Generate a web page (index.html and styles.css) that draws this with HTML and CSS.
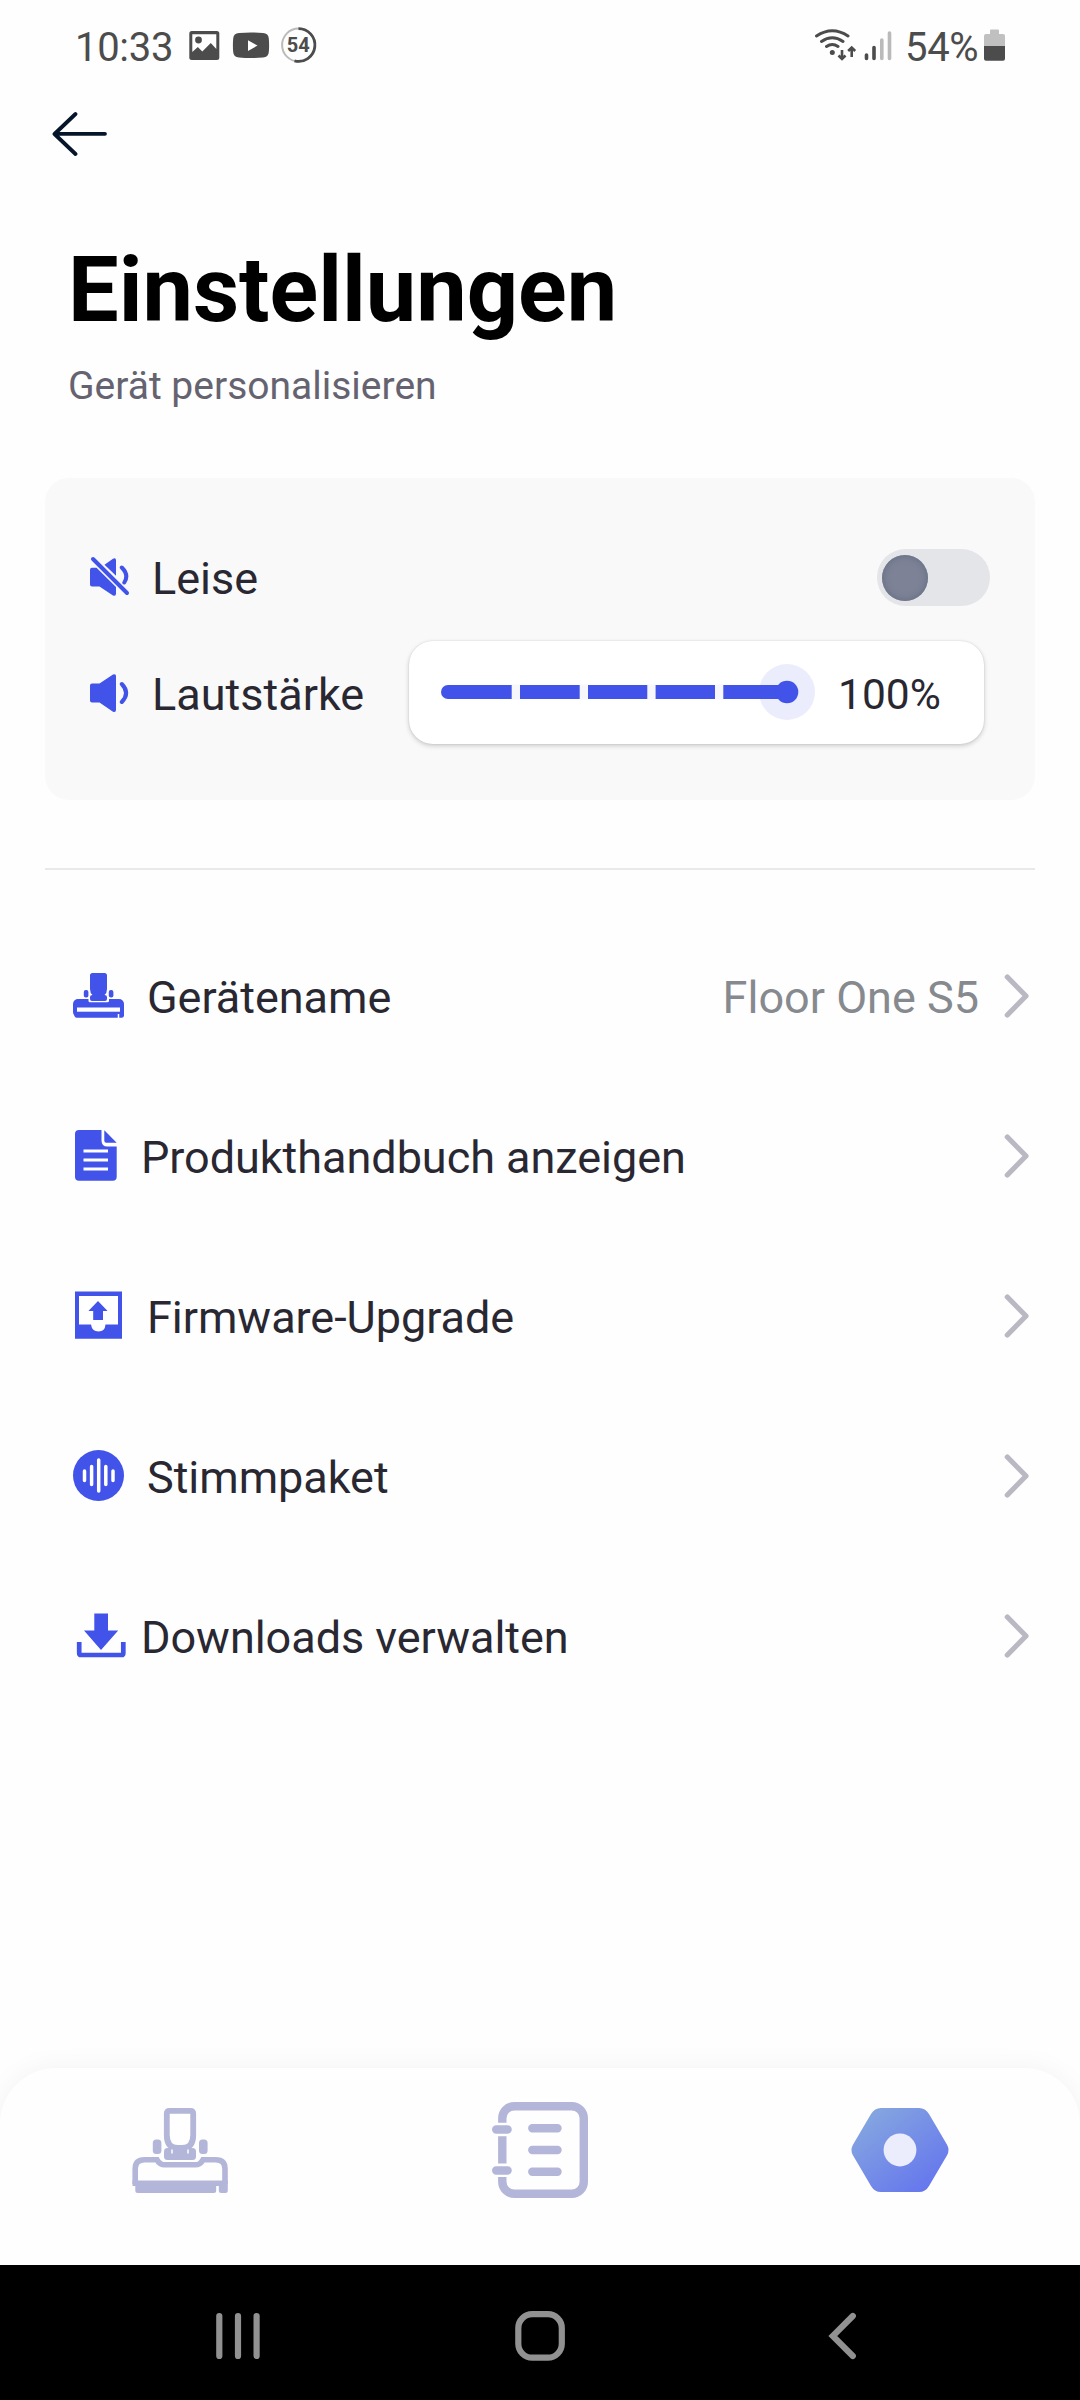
FILE: index.html
```html
<!DOCTYPE html>
<html lang="de">
<head>
<meta charset="utf-8">
<title>Einstellungen</title>
<link rel="stylesheet" href="styles.css">
</head>
<body>
<div class="screen">
  <header class="status">
    <span class="clock">10:33</span>
    <svg class="status-icons" width="160" height="44" viewBox="180 25 160 44">
      <rect x="189.300" y="31" width="30" height="29" rx="2.500" fill="#4c4c4c"/>
      <path d="M192.300 34.200h24v14.800l-5.500-6-8.500 8.500-4.500-4.500-5.500 5z" fill="#fff"/>
      <circle cx="198.500" cy="40" r="3.400" fill="#4c4c4c"/>
      <path d="M239 33q12-1 24 0 5.500.3 5.800 5.500.6 7 0 13.500-.3 5.200-5.800 5.500-12 1-24 0-5.500-.3-5.800-5.500-.6-6.500 0-13.500.3-5.200 5.800-5.500z" fill="#4c4c4c"/>
      <path d="M248 40.300v10.600l9.500-5.300z" fill="#fff"/>
      <circle cx="298.500" cy="45" r="16.400" fill="none" stroke="#bbb" stroke-width="2"/>
      <path d="M298.500 28.600a16.400 16.400 0 1 1-4 32.300" fill="none" stroke="#4c4c4c" stroke-width="2.800"/>
      <text class="badge-num" x="298.300" y="52.300" text-anchor="middle">54</text>
    </svg>
    <svg class="signal" width="84" height="44" viewBox="808 25 84 44">
      <g fill="none" stroke="#4c4c4c" stroke-width="3" stroke-linecap="round">
        <path d="M816.500 36q15.800-10.500 31.500 0M821.500 41.500q10.800-7.500 21.500 0M826.500 46.500q5.800-4 11.500 0"/>
        <path d="M842 50v8.500M838.500 55.500l3.500 3.500 3.500-3.500M851.700 57v-8.500M848.200 51l3.500-3.500 3.500 3.500" stroke-width="2.600" stroke-linecap="butt"/>
      </g>
      <circle cx="832.300" cy="52.500" r="2.500" fill="#4c4c4c"/>
      <g fill="none" stroke-width="3.600" stroke-linecap="round">
        <path d="M866.500 55v3.500M874 47.500v11" stroke="#4c4c4c"/>
        <path d="M881.800 40v18.500M889.500 33v25.500" stroke="#bababa"/>
      </g>
    </svg>
    <span class="percent">54%</span>
    <svg width="21" height="44" viewBox="984 25 21 44">
      <path d="M990 34v-3.500q0-1 1-1h7q1 0 1 1V34h4q2 0 2 2v11h-21V36q0-2 2-2z" fill="#c0c0c0"/>
      <path d="M984 46h21v12.700q0 2-2 2h-17q-2 0-2-2z" fill="#4c4c4c"/>
    </svg>
  </header>

  <nav class="back">
    <svg width="56" height="46" viewBox="52 111 56 46"><path d="M75.500 114l-21 20 21 20M55 133.800h50" fill="none" stroke="#06152a" stroke-width="3.800" stroke-linecap="round" stroke-linejoin="round"/></svg>
  </nav>

  <h1 class="title">Einstellungen</h1>
  <p class="subtitle">Gerät personalisieren</p>

  <section class="card">
    <div class="card-row">
      <svg width="42" height="48" viewBox="88 555 42 48">
        <path d="M92 567.700h4.500L116 587v6.500q0 3-3 2l-13.500-9H92q-2 0-2-2v-14.800q0-2 2-2zM104.500 564.700l8.500-6q3-1.300 3 1.600v15.500z" fill="#4153e8"/>
        <path d="M121.800 567.500q7.500 7.500 2.500 15" fill="none" stroke="#4153e8" stroke-width="4" stroke-linecap="round"/>
        <path d="M93 559l34 34" fill="none" stroke="#4153e8" stroke-width="4" stroke-linecap="round"/>
      </svg>
      <span class="card-label">Leise</span>
      <span class="toggle"><span class="toggle-knob"></span></span>
    </div>
    <div class="card-row">
      <svg width="42" height="48" viewBox="88 671 42 48">
        <path d="M90 685.500q0-2 2-2h7.500l13.500-9q3-1.200 3 1.600v33.700q0 3-3 2l-13.500-9.300H92q-2 0-2-2z" fill="#4153e8"/>
        <path d="M121.800 684q8.600 9 0 18" fill="none" stroke="#4153e8" stroke-width="4" stroke-linecap="round"/>
      </svg>
      <span class="card-label">Lautstärke</span>
      <div class="slider-box">
        <svg width="380" height="60" viewBox="438 663 380 60">
          <circle cx="787" cy="692" r="28" fill="#ebedfd"/>
          <rect x="441" y="685" width="346" height="14" rx="7" fill="#4153e8"/>
          <path d="M511.700 684.500h8.300v15h-8.300zM579.700 684.500h8.300v15h-8.300zM647.300 684.500h8.300v15h-8.300zM715 684.500h8.300v15h-8.300z" fill="#f7f7fb"/>
          <circle cx="787" cy="692" r="11.300" fill="#4153e8"/>
        </svg>
        <span class="volume-value">100%</span>
      </div>
    </div>
  </section>

  <hr class="divider">

  <ul class="list">
    <li class="item">
      <svg class="item-icon" width="56" height="56" viewBox="72 970 56 56">
        <rect x="73" y="999" width="51" height="18" rx="5" fill="#4153e8"/>
        <path d="M74.500 1010h49.500v5.500q0 2.300-2.300 2.300h-45q-2.200 0-2.200-2.300z" fill="#4153e8"/>
        <rect x="88.500" y="993" width="20.500" height="9.300" rx="1.500" fill="#fff"/>
        <rect x="77" y="1007.500" width="43" height="4.200" fill="#fff"/>
        <path d="M118.500 1014v4.500" stroke="#fff" stroke-width="1.500"/>
        <path d="M92.500 973h12q2.500 0 2.500 2.500v13.500q0 4-2.500 6 2.500 0 2.500 2v2q0 2-2 2H92q-2 0-2-2v-2q0-2 2.500-2-2.500-2-2.500-6v-13.500q0-2.500 2.500-2.500z" fill="#4153e8"/>
        <rect x="83.800" y="990" width="4.600" height="7.500" rx="2" fill="#4153e8"/>
        <rect x="108.800" y="990" width="4.600" height="7.500" rx="2" fill="#4153e8"/>
      </svg>
      <span class="item-label">Gerätename</span>
      <span class="item-value">Floor One S5</span>
      <svg class="chevron" width="30" height="56" viewBox="1002 970 30 56"><path d="M1007.300 977l18.700 19-18.700 19"/></svg>
    </li>
    <li class="item">
      <svg class="item-icon" width="50" height="56" viewBox="72 1130 50 56">
        <path d="M79 1130h22.500v10.500q0 6 6 6h9.200v30.200q0 4-4 4H79q-4 0-4-4V1134q0-4 4-4zM104.300 1130.300l12.400 12.500h-10.400q-2 0-2-2z" fill="#4153e8"/>
        <path d="M83.500 1151h24.500M83.500 1160h24.500M83.500 1169h24.500" stroke="#fff" stroke-width="3"/>
      </svg>
      <span class="item-label">Produkthandbuch anzeigen</span>
      <svg class="chevron" width="30" height="56" viewBox="1002 970 30 56"><path d="M1007.300 977l18.700 19-18.700 19"/></svg>
    </li>
    <li class="item">
      <svg class="item-icon" width="56" height="56" viewBox="72 1290 56 56">
        <path d="M75 1291.500h47v47.300H75z" fill="#4153e8"/>
        <path d="M79 1296h39v28.500h-12.500q-.5 7-7 7t-7.500-7H79z" fill="#fff"/>
        <path d="M98 1301l9.600 10h-4.600v9h-9.800v-9h-4.800z" fill="#4153e8"/>
      </svg>
      <span class="item-label">Firmware-Upgrade</span>
      <svg class="chevron" width="30" height="56" viewBox="1002 970 30 56"><path d="M1007.300 977l18.700 19-18.700 19"/></svg>
    </li>
    <li class="item">
      <svg class="item-icon" width="56" height="56" viewBox="72 1450 56 56">
        <circle cx="98.500" cy="1475.500" r="25.500" fill="#4153e8"/>
        <path d="M84.500 1471v9.500M91.600 1466.500v18M98.700 1460v31M105.800 1466.500v18M113 1471v9.500" stroke="#fff" stroke-width="3.500" stroke-linecap="round"/>
      </svg>
      <span class="item-label">Stimmpaket</span>
      <svg class="chevron" width="30" height="56" viewBox="1002 970 30 56"><path d="M1007.300 977l18.700 19-18.700 19"/></svg>
    </li>
    <li class="item">
      <svg class="item-icon" width="50" height="56" viewBox="72 1610 50 56">
        <path d="M94.300 1613.500H108v17h10.200L101 1650l-17-19.500h10.300z" fill="#4153e8"/>
        <path d="M79.200 1642v11.200q0 1.800 1.800 1.800h40.500q1.800 0 1.800-1.800V1642" fill="none" stroke="#4153e8" stroke-width="4.700"/>
      </svg>
      <span class="item-label">Downloads verwalten</span>
      <svg class="chevron" width="30" height="56" viewBox="1002 970 30 56"><path d="M1007.300 977l18.700 19-18.700 19"/></svg>
    </li>
  </ul>

  <nav class="tabs">
    <svg width="100" height="100" viewBox="130 2100 100 100">
      <path d="M135.200 2184v-15q0-9.200 9.200-9.200H157q2.500 5 8 5h30q5.500 0 8-5h12.800q9.200 0 9.200 9.200v15" fill="none" stroke="#b3b6d8" stroke-width="5.600"/>
      <path d="M132.500 2180.500h95.300v10q0 2.500-2.500 2.500h-4q-2.500 0-2.500-2.500v-4.500h-2.600v4.500q0 2.500-2.500 2.500h-75.900q-2.500 0-2.500-2.500v-4.500h-2.800z" fill="#b3b6d8"/>
      <rect x="161.500" y="2150" width="37.500" height="12" rx="3" fill="#fff"/>
      <rect x="164" y="2148" width="32" height="12" rx="3.500" fill="#b3b6d8"/>
      <path d="M169.500 2110.800h21q2.700 0 2.700 2.700v21.500q0 13-11 13h-4.400q-11 0-11-13v-21.500q0-2.700 2.700-2.700z" fill="#fff" stroke="#b3b6d8" stroke-width="5.800"/>
      <path d="M172 2149.500v4M188 2149.500v4" stroke="#fff" stroke-width="1.500"/>
      <rect x="152.800" y="2139.500" width="8.600" height="14.500" rx="3.500" fill="#b3b6d8"/>
      <rect x="199" y="2139.500" width="8.600" height="14.500" rx="3.500" fill="#b3b6d8"/>
    </svg>
    <svg width="100" height="100" viewBox="490 2100 100 100">
      <rect x="502.300" y="2106.200" width="81.500" height="87.600" rx="12" fill="none" stroke="#b3b6d8" stroke-width="8.400"/>
      <path d="M496 2122.700h14v13.600h-14zM496 2163.500h14v13.600h-14z" fill="#fff"/>
      <path d="M496.200 2129.500h11.400M496.200 2170.500h11.400M532.300 2128.300h25.200M532.300 2150h25.200M532.300 2171.800h25.200" stroke="#b3b6d8" stroke-width="8.400" stroke-linecap="round"/>
    </svg>
    <svg width="100" height="100" viewBox="850 2100 100 100">
      <defs>
        <linearGradient id="nut" x1="0.100" y1="0.050" x2="0.900" y2="0.950">
          <stop offset="0" stop-color="#86a8df"/>
          <stop offset="1" stop-color="#6474ee"/>
        </linearGradient>
      </defs>
      <path d="M881 2108h38q6.500 0 10 6l18.200 31q2.600 5 0 10l-18.200 31q-3.500 6-10 6h-38q-6.500 0-10-6l-18.200-31q-2.600-5 0-10l18.200-31q3.500-6 10-6z" fill="url(#nut)"/>
      <circle cx="900" cy="2150" r="16.400" fill="#ebedfc"/>
    </svg>
  </nav>

  <nav class="sysnav">
    <svg width="60" height="60" viewBox="208 2306 60 60"><path d="M219.300 2316v40M238 2316v40M256.600 2316v40"/></svg>
    <svg width="60" height="60" viewBox="510 2306 60 60"><rect x="518.300" y="2314.200" width="43.500" height="43.500" rx="14"/></svg>
    <svg width="60" height="60" viewBox="812 2306 60 60"><path d="M852.800 2316l-20 20 20 20"/></svg>
  </nav>
</div>
</body>
</html>
```
FILE: styles.css
```css
* {
  box-sizing: border-box;
}

body {
  margin: 0;
  background: #fff;
  font-family: Roboto, "Liberation Sans", sans-serif;
}

svg {
  display: block;
  flex: none;
}

.screen {
  display: flex;
  flex-direction: column;
  width: 1080px;
  height: 2400px;
  overflow: hidden;
  background: #fefefe;
}

/* Android status bar */
.status {
  display: flex;
  align-items: center;
  height: 94px;
  padding: 0 75px;
  color: #4c4c4c;
  font-size: 40px;
  line-height: 48px;
}

.clock {
  width: 105px;
  padding-top: 1px;
  letter-spacing: -0.3px;
}

.signal {
  margin-left: auto;
}

.percent {
  width: 79px;
  margin-left: 13px;
  padding-top: 1px;
  letter-spacing: -0.3px;
}

.badge-num {
  font-size: 20px;
  font-weight: 700;
  letter-spacing: 0;
  fill: #4c4c4c;
}

/* Page heading */
.back {
  display: flex;
  align-items: center;
  height: 80px;
  padding-left: 52px;
}

.title {
  margin: 64px 0 0 68px;
  color: #000;
  font-size: 90px;
  font-weight: 700;
  line-height: 106px;
}

.subtitle {
  margin: 19px 0 0 68px;
  color: #656370;
  font-size: 39px;
  line-height: 46px;
}

/* Sound card */
.card {
  height: 322px;
  margin: 69px 45px 0;
  padding: 43px 45px 0 43px;
  border-radius: 24px;
  background: #f9f9f9;
}

.card-row {
  display: flex;
  align-items: center;
  height: 116px;
}

.card-label {
  margin-left: 22px;
  color: #292832;
  font-size: 45px;
  line-height: 54px;
}

.toggle {
  display: flex;
  align-items: center;
  width: 113px;
  height: 57px;
  margin: 0 0 3px auto;
  padding-left: 5px;
  border-radius: 29px;
  background: #e4e5e9;
}

.toggle-knob {
  width: 46px;
  height: 46px;
  border-radius: 50%;
  background: #7d8296;
  box-shadow: inset 0 0 6px 1px #667085;
}

.slider-box {
  display: flex;
  align-items: center;
  width: 575px;
  height: 103px;
  margin: 0 6px 5px auto;
  padding-left: 29px;
  border-radius: 24px;
  background: #fff;
  box-shadow: 0 2px 5px rgba(0, 0, 0, 0.18), 0 0 2px rgba(0, 0, 0, 0.12);
}

.volume-value {
  margin-left: 20px;
  padding-top: 4px;
  color: #292832;
  font-size: 42.5px;
  line-height: 50px;
}

.divider {
  flex: none;
  width: 990px;
  height: 2px;
  margin: 68px 45px 0;
  border: 0;
  background: #e9e9eb;
}

/* Settings list */
.list {
  margin: 48px 0 0;
  padding: 0;
  list-style: none;
}

.item {
  display: flex;
  align-items: center;
  height: 160px;
  padding: 0 48px 0 72px;
  color: #292832;
  font-size: 45px;
  line-height: 54px;
}

.item-icon {
  margin-right: 19px;
  overflow: visible;
}

.item-label {
  letter-spacing: -0.04px;
}

.item-value {
  margin-left: auto;
  color: #868a8f;
}

.chevron {
  margin-left: auto;
  fill: none;
  stroke: #bab9c3;
  stroke-width: 5.2;
  stroke-linecap: round;
  stroke-linejoin: round;
}

.item-value + .chevron {
  margin-left: 23px;
}

/* App tab bar */
.tabs {
  display: grid;
  grid-template-columns: repeat(3, 1fr);
  justify-items: center;
  align-items: start;
  height: 197px;
  margin-top: auto;
  padding-top: 32px;
  border-radius: 56px 56px 0 0;
  background: #fefefe;
  box-shadow: 0 0 28px rgba(0, 0, 0, 0.05);
}

/* Android navigation bar */
.sysnav {
  display: grid;
  grid-template-columns: repeat(3, 302px);
  justify-content: center;
  justify-items: center;
  align-items: center;
  height: 135px;
  padding-top: 7px;
  background: #000;
  z-index: 1;
}

.sysnav svg {
  fill: none;
  stroke: #919191;
  stroke-width: 6.2;
  stroke-linecap: round;
}
```
